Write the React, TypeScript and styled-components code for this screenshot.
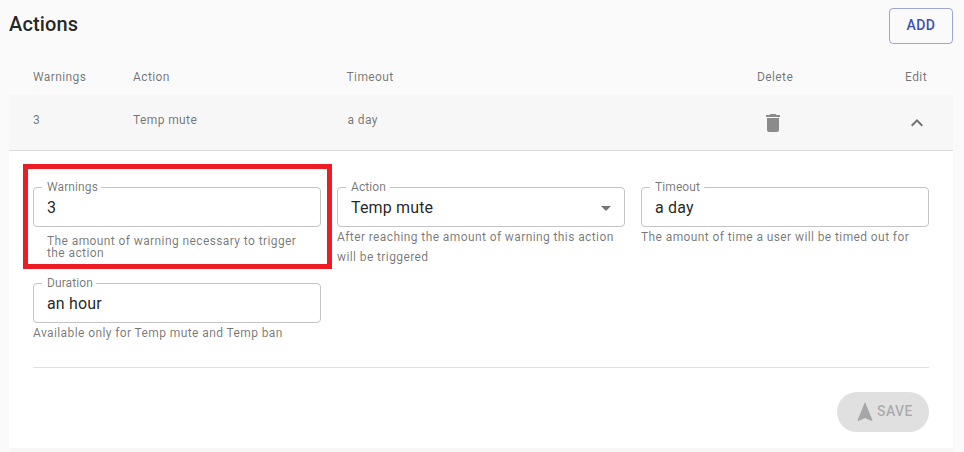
import React from "react";
import styled, { createGlobalStyle } from "styled-components";

const GlobalStyle = createGlobalStyle`
  *, *::before, *::after { box-sizing: border-box; }
  body {
    margin: 0;
    background: #fafafa;
    color: rgba(0, 0, 0, 0.87);
    font-family: Roboto, "Liberation Sans", sans-serif;
    overflow: hidden;
  }
`;

const Page = styled.main`
  height: 452px;
  padding: 8px 11px 0 9px;
  display: flex;
  flex-direction: column;
  overflow: hidden;
`;

const TitleBar = styled.header`
  display: flex;
  justify-content: space-between;
  align-items: flex-start;
  height: 36px;
`;

const Title = styled.h1`
  margin: 0;
  font-size: 20px;
  font-weight: 500;
  line-height: 32px;
  letter-spacing: 0.15px;
`;

const AddButton = styled.button`
  width: 64px;
  height: 36px;
  padding: 0 0 2px;
  border: 1px solid rgba(63, 81, 181, 0.5);
  border-radius: 4px;
  background: transparent;
  color: #3f51b5;
  font: 500 14px/24px Roboto, sans-serif;
  letter-spacing: 0.4px;
`;

const Columns = styled.div`
  display: grid;
  grid-template-columns: 100px 213.500px 1fr 122px 50px;
  padding: 0 24px;
  font-size: 12px;
  line-height: 20px;
  letter-spacing: 0.4px;
  color: rgba(0, 0, 0, 0.54);
`;

const HeaderRow = styled(Columns)`
  height: 51px;
  padding-top: 23px;
`;

const Cell = styled.span<{ $align?: "center" | "end"; $shift?: number }>`
  text-align: ${(p) => p.$align ?? "start"};
  padding-left: ${(p) => p.$shift ?? 0}px;
  padding-right: ${(p) => (p.$align === "end" ? 2 : 0)}px;
`;

const Panel = styled.section`
  height: 353px;
  flex: none;
  background: #fff;
`;

const Summary = styled(Columns)`
  height: 56px;
  padding-top: 15px;
  background: #f7f7f7;
  border-bottom: 1px solid #dadada;
`;

const IconCell = styled.span<{ $end?: boolean }>`
  display: flex;
  justify-content: ${(p) => (p.$end ? "flex-end" : "flex-start")};
  padding-left: ${(p) => (p.$end ? 0 : 4)}px;
  padding-top: 1px;
  svg { display: block; flex: none; }
`;

const Form = styled.div`
  display: grid;
  grid-template-columns: repeat(3, 288px);
  grid-template-rows: 96px 84px;
  column-gap: 16px;
  margin: 36px 24px 0;
  border-bottom: 1px solid #e0e0e0;
  height: 181px;
`;

const Field = styled.div`
  position: relative;
`;

const Outline = styled.fieldset`
  display: block;
  min-width: 0;
  height: 45px;
  margin: -5px 0 0;
  padding: 0 6px 0 8px;
  border: 1px solid #c4c4c4;
  border-radius: 4px;
`;

const Label = styled.legend`
  height: 11px;
  padding: 0 3.500px 0 5px;
  font-size: 12px;
  line-height: 10px;
  letter-spacing: 0.1px;
  color: rgba(0, 0, 0, 0.54);
`;

const Value = styled.div`
  display: flex;
  justify-content: space-between;
  align-items: center;
  height: 24px;
  padding: 0 0 0 5px;
  margin-top: 3px;
  font-size: 16px;
  line-height: 24px;
  letter-spacing: 0.15px;
`;

const Helper = styled.p<{ $dense?: boolean }>`
  margin: ${(p) => (p.$dense ? "8px 14px 0" : "0")};
  font-size: 12px;
  line-height: ${(p) => (p.$dense ? "12px" : "20px")};
  letter-spacing: 0.4px;
  color: rgba(0, 0, 0, 0.54);
`;

const Highlight = styled.div`
  position: absolute;
  left: -10px;
  top: -23px;
  width: 309px;
  height: 105px;
  border: 5px solid #ed1c24;
  pointer-events: none;
`;

const Footer = styled.footer`
  display: flex;
  justify-content: flex-end;
  padding: 24px 24px 0;
`;

const SaveButton = styled.button`
  display: flex;
  align-items: center;
  width: 92px;
  height: 40px;
  padding: 0 0 0 16px;
  border: 0;
  border-radius: 20px;
  background: #e0e0e0;
  color: rgba(0, 0, 0, 0.26);
  font: 500 14px/24px Roboto, sans-serif;
  letter-spacing: 0.4px;
  svg { flex: none; }
`;

const SaveLabel = styled.span`
  padding-bottom: 2px;
`;

const NextPanel = styled.div`
  flex: none;
  height: 4px;
  background: #f7f7f7;
`;

function Icon({ d, color }: { d: string; color: string }) {
  return (
    <svg width="24" height="24" viewBox="0 0 24 24" fill={color}>
      <path d={d} />
    </svg>
  );
}

const TRASH = "M6 19c0 1.1.9 2 2 2h8c1.1 0 2-.9 2-2V7H6v12zM19 4h-3.500l-1-1h-5l-1 1H5v2h14V4z";
const CHEVRON_UP = "M12 8l-6 6 1.410 1.410L12 10.830l4.590 4.580L18 14z";
const ARROW_DOWN = "M7 10l5 5 5-5z";
const NAVIGATION = "M12 2L4.500 20.290l.710.710L12 18l6.790 3 .710-.710z";

interface FieldProps {
  label: string;
  value: string;
  helper: string;
  select?: boolean;
  highlighted?: boolean;
}

function OutlinedField({ label, value, helper, select, highlighted }: FieldProps) {
  return (
    <Field>
      <Outline>
        <Label>{label}</Label>
        <Value>
          {value}
          {select && <Icon d={ARROW_DOWN} color="#757575" />}
        </Value>
      </Outline>
      <Helper $dense={highlighted}>{helper}</Helper>
      {highlighted && <Highlight />}
    </Field>
  );
}

export default function App() {
  return (
    <>
      <GlobalStyle />
      <Page>
        <TitleBar>
          <Title>Actions</Title>
          <AddButton>ADD</AddButton>
        </TitleBar>
        <HeaderRow>
          <Cell>Warnings</Cell>
          <Cell>Action</Cell>
          <Cell>Timeout</Cell>
          <Cell>Delete</Cell>
          <Cell $align="end">Edit</Cell>
        </HeaderRow>
        <Panel>
          <Summary>
            <Cell>3</Cell>
            <Cell>Temp mute</Cell>
            <Cell $shift={1}>a day</Cell>
            <IconCell><Icon d={TRASH} color="#8b8b8b" /></IconCell>
            <IconCell $end><Icon d={CHEVRON_UP} color="#717171" /></IconCell>
          </Summary>
          <Form>
            <OutlinedField
              label="Warnings"
              value="3"
              helper="The amount of warning necessary to trigger the action"
              highlighted
            />
            <OutlinedField
              label="Action"
              value="Temp mute"
              helper="After reaching the amount of warning this action will be triggered"
              select
            />
            <OutlinedField
              label="Timeout"
              value="a day"
              helper="The amount of time a user will be timed out for"
            />
            <OutlinedField
              label="Duration"
              value="an hour"
              helper="Available only for Temp mute and Temp ban"
            />
          </Form>
          <Footer>
            <SaveButton>
              <Icon d={NAVIGATION} color="#a6a6a6" />
              <SaveLabel>SAVE</SaveLabel>
            </SaveButton>
          </Footer>
        </Panel>
        <NextPanel />
      </Page>
    </>
  );
}
